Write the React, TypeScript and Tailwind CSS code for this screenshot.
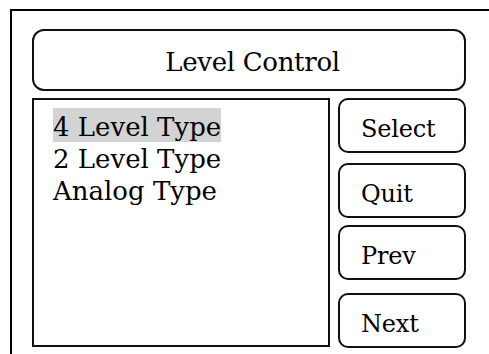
const items = ["4 Level Type", "2 Level Type", "Analog Type"];

const buttons = [
  { label: "Select", gap: "mt-0" },
  { label: "Quit", gap: "mt-[10px]" },
  { label: "Prev", gap: "mt-[7px]" },
  { label: "Next", gap: "mt-[13px]" },
];

const App = () => {
  return (
    <div className="w-[489px] h-[354px] overflow-hidden bg-white text-black font-['DejaVu_Serif',serif]">
      <div className="ml-[10px] mt-[9px] w-[520px] h-[380px] border-2 border-black pl-[20px] pt-[18px]">
        <div className="w-[434px] h-[62px] rounded-[12px] border-2 border-[#111] flex items-center justify-center pt-[5px] pl-[7px] text-[26px] tracking-[-0.3px]">
          Level Control
        </div>

        <div className="flex mt-[7px] gap-[8px]">
          <div className="w-[298px] h-[249px] border-2 border-[#111] pl-[19px] pt-[11px] text-[26px] leading-[32px]">
            {items.map((item, i) => (
              <div key={item}>
                <span className={i === 0 ? "bg-[#d3d3d3] pt-[4px]" : ""}>{item}</span>
              </div>
            ))}
          </div>

          <div className="flex flex-col">
            {buttons.map((b) => (
              <div
                key={b.label}
                className={`${b.gap} w-[128px] h-[55px] rounded-[10px] border-2 border-[#111] flex items-center pl-[21px] pt-[7px] text-[24px] tracking-[-0.2px]`}
              >
                {b.label}
              </div>
            ))}
          </div>
        </div>
      </div>
    </div>
  );
};

export default App;
